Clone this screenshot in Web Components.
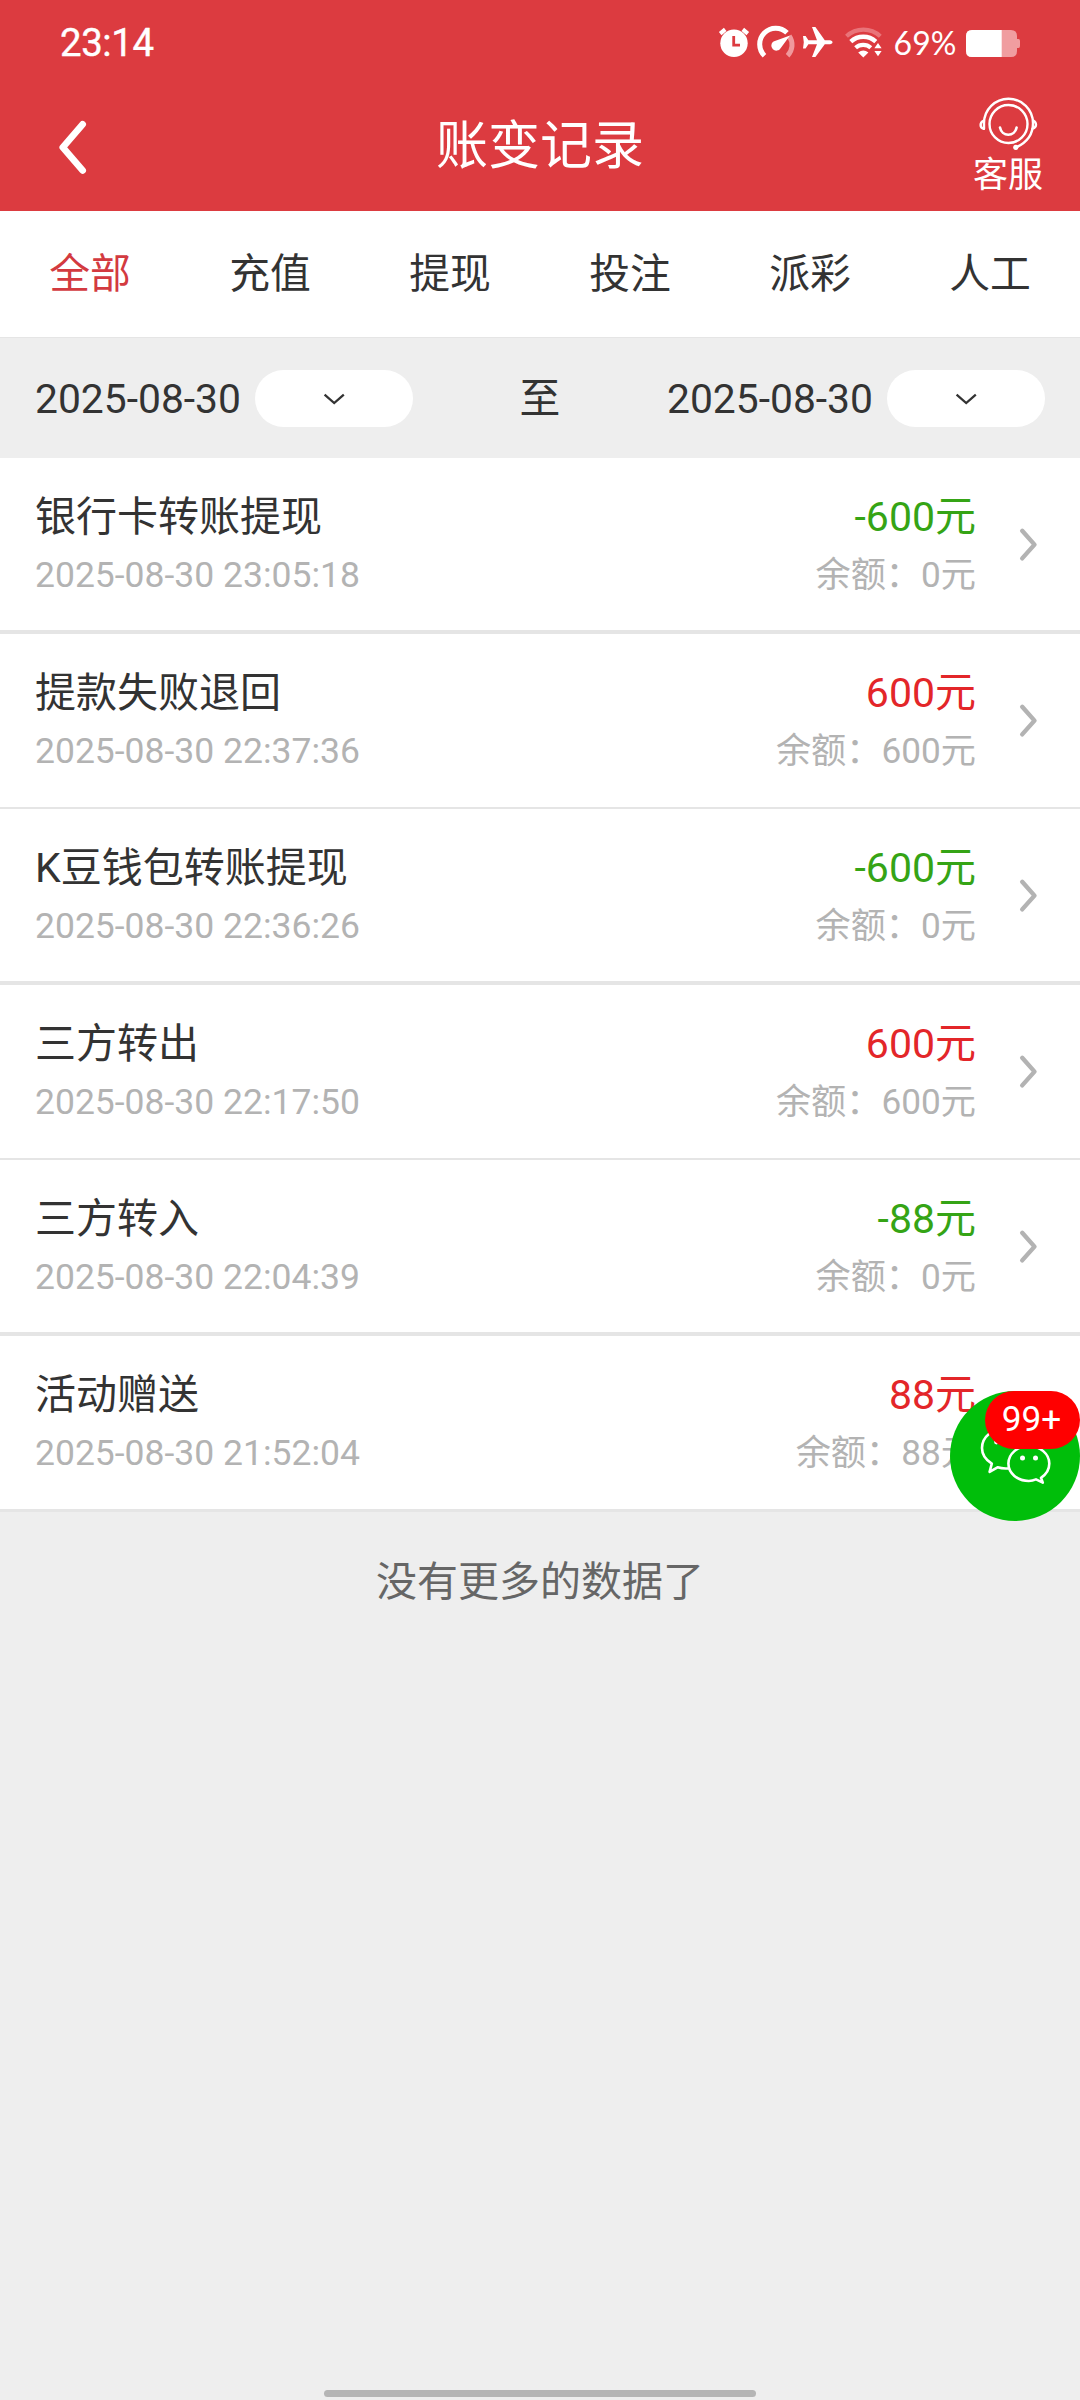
<!DOCTYPE html>
<html lang="zh-CN">
<head>
<meta charset="utf-8">
<title>账变记录</title>
<style>
html,body{margin:0;padding:0}
body{width:1080px;height:2400px;overflow:hidden;background:#eee;color:#333;font-family:Roboto,"Noto Sans CJK SC",sans-serif}
</style>
</head>
<body>
<app-screen></app-screen>
<script>
const define = (name, html) => {
  const t = document.createElement('template');
  t.innerHTML = html;
  customElements.define(name, class extends HTMLElement {
    constructor() {
      super();
      this.attachShadow({mode: 'open'}).append(t.content.cloneNode(true));
    }
  });
};

define('status-bar', `
<style>
:host{display:flex;height:84px;box-sizing:border-box;align-items:flex-start;justify-content:space-between;padding:0 60px;color:#fff}
.time{font-size:38.4px;line-height:44px;padding-top:21px;letter-spacing:-.4px;-webkit-text-stroke:.4px #fff}
.right{display:flex;align-items:flex-start}
.icons{display:block;margin-top:24px}
.pct{font-family:Lato,sans-serif;font-size:32px;line-height:38px;padding-top:24px;width:66px;text-align:center;margin:0 8px 0 6px}
.bat{display:block;margin-top:30px}
</style>
<span class="time">23:14</span>
<div class="right">
<svg class="icons" width="170" height="36" viewBox="716 24 170 36" fill="none" stroke-linecap="butt">
  <circle cx="734" cy="43.3" r="13.7" fill="#fff"/>
  <path d="M720.2 33.6l5-4.2M747.8 33.6l-5-4.2" stroke="#fff" stroke-width="4"/>
  <path d="M733.7 36v9.2h6.3" stroke="#dc3b40" stroke-width="2.8"/>
  <path d="M764.5 55.7A15.4 15.4 0 0 1 787 32.8" stroke="#fff" stroke-width="5"/>
  <path d="M789.2 36A15.4 15.4 0 0 1 787.6 55.7" stroke="#f0989c" stroke-width="5"/>
  <path d="M790 35.5L780.6 48.2A5 5 0 1 1 773.5 41.5Z" fill="#fff"/>
  <path d="M803 36h2.6l2.8 4.2h8.6L812 27h3.4l9.4 13.2h5.4q2.4.5 2.4 2t-2.4 2h-5.4L815.4 57H812l5-12.8h-8.6l-2.8 4.2H803l.8-6.2z" fill="#fff"/>
  <path d="M846.5 36.2A25 25 0 0 1 880.3 36.2" stroke="#e97479" stroke-width="4.2"/>
  <path d="M850.8 41.6A18.5 18.5 0 0 1 875.8 41.6" stroke="#fff" stroke-width="4.4"/>
  <path d="M855.6 47.8A11.3 11.3 0 0 1 870.8 47.8" stroke="#fff" stroke-width="4.2"/>
  <path d="M858.2 52.4Q863.3 48.8 868.4 52.4L863.3 57.4Z" fill="#fff"/>
  <path d="M878 43l3.6 5.2h-7.2zM878 56.2l3.6-5.2h-7.2z" fill="#fff"/>
</svg>
<span class="pct">69%</span>
<svg class="bat" width="54" height="27" viewBox="0 0 54 27">
  <path d="M6 0H45Q51 0 51 6V9h1.5Q54 9 54 11v5q0 2-1.5 2H51v3q0 6-6 6H6q-6 0-6-6V6Q0 0 6 0Z" fill="#f09da0"/>
  <path d="M6 0H35.7V27H6q-6 0-6-6V6Q0 0 6 0Z" fill="#fff"/>
</svg>
</div>`);

define('nav-bar', `
<style>
:host{display:grid;grid-template-columns:1fr auto 1fr;height:127px;align-items:start;color:#fff}
.back{display:block;margin:34px 0 0 56px}
.title{font-size:52px;line-height:66px;padding-top:30px}
.svc{justify-self:end;width:80px;margin-right:32px;display:flex;flex-direction:column;align-items:center;padding-top:10px}
.svc svg{display:block}
.label{font-size:35px;line-height:40px;margin-top:4px}
</style>
<svg class="back" width="34" height="58" viewBox="56 118 34 58" fill="none" stroke="#fff" stroke-width="6.8" stroke-linecap="round" stroke-linejoin="round"><path d="M82.6 124.4L62.8 147.4L82.6 170.4"/></svg>
<span class="title"><slot></slot></span>
<div class="svc">
<svg width="68" height="58" viewBox="974.2 94 68 58" fill="none" stroke="#fff" stroke-width="2.4" stroke-linecap="round">
  <path d="M984.2 128.8V123.2A24.5 24.5 0 0 1 1033.2 123.2Q1033.2 139.5 1016.5 147.3"/>
  <circle cx="1008.7" cy="124" r="19"/>
  <path d="M1000.2 127.6A8.5 9.2 0 0 0 1016.8 127.6" stroke-width="2.6"/>
  <path d="M984 120.5Q980.8 122 980.8 125T984 128.8M1033.5 120.5Q1036.2 122 1036.2 124.8T1032.8 128.6"/>
  <circle cx="1016" cy="147.3" r="2.6" fill="#fff" stroke="none"/>
</svg>
<span class="label">客服</span>
</div>`);

define('tab-bar', `
<style>:host{display:flex;height:126px;background:#fff}</style><slot></slot>`);
define('tab-item', `
<style>
:host{display:flex;flex:1;justify-content:center;font-size:40.8px;line-height:126px;color:#333}
:host([active]){color:#d33a40}
</style><slot></slot>`);

define('date-field', `
<style>
:host{display:flex;align-items:center;gap:14px;font-size:40.8px;line-height:57px}
.date{width:206px;height:57px;line-height:59px;white-space:nowrap}
.pill{display:flex;width:158px;height:57px;border-radius:29px;background:#fff;align-items:center;justify-content:center}
</style>
<span class="date"><slot></slot></span>
<span class="pill"><svg width="22" height="12" viewBox="0 0 22 12" fill="none" stroke="#333" stroke-width="2.3"><path d="M1.6 1.6L11.2 10L20.8 1.6"/></svg></span>`);
define('date-range', `
<style>
:host{display:flex;box-sizing:border-box;height:121px;padding:1px 35px 0;border-top:1px solid #e5e5e5;background:#eee;align-items:center;justify-content:space-between;font-size:40.8px;line-height:57px}
::slotted(span){padding-top:2px}
</style><slot></slot>`);

define('record-item', `
<style>
:host{display:flex;box-sizing:border-box;height:176px;background:#fff;border-bottom:4px solid #e5e5e5;padding:29px 42px 0 35px;align-items:flex-start}
:host(:nth-child(even)){height:175px;border-bottom-width:2px}
:host(:last-child){height:176px;border-bottom-width:3px}
.col{display:flex;flex-direction:column;gap:3px;flex:1;white-space:nowrap}
.end{text-align:right}
.main{font-size:41px;line-height:60px;color:#333}
.sub{font-size:35.5px;line-height:50px;color:#b3b3b3}
.end .sub{font-size:35.2px}
svg{display:block;margin:39px 0 0 42px}
</style>
<div class="col"><span class="main"><slot name="title"></slot></span><span class="sub"><slot name="time"></slot></span></div>
<div class="col end"><span class="main"><slot name="amount"></slot></span><span class="sub"><slot name="balance"></slot></span></div>
<svg width="20" height="37" viewBox="0 0 20 37" fill="none" stroke="#b3b3b3" stroke-width="4.4" stroke-linecap="round" stroke-linejoin="round"><path d="M4.2 4.8L16.5 18.6L4.2 32.4"/></svg>
`);

define('record-list', `<style>:host{display:block}</style><slot></slot>`);

define('chat-float', `
<style>
:host{position:absolute;left:950px;top:1391px;width:130px;height:130px}
svg{display:block}
.badge{position:absolute;right:0;top:0;width:95px;height:58px;box-sizing:border-box;padding-right:2px;border-radius:29px;background:#f00;color:#fff;font-size:35.2px;line-height:56px;text-align:center}
</style>
<svg width="130" height="130" viewBox="950 1391 130 130" fill="none" stroke="#fff" stroke-width="2.6" stroke-linejoin="round">
  <circle cx="1015" cy="1456" r="65" fill="#00be0a" stroke="none"/>
  <path d="M1009.5 1468.3Q1003 1469 997.5 1467.3L989.6 1471.8L991.8 1463.6C985.6 1459.8 982 1454 982 1448C982 1436.5 993 1428 1006.5 1428C1018 1428 1027 1435 1030 1446"/>
  <circle cx="996.5" cy="1442" r="2.4" fill="#fff" stroke="none"/>
  <path d="M1042.8 1482.6L1041 1477.8C1046 1474.6 1049.3 1469.2 1049.3 1463.6C1049.3 1453.8 1040 1446 1028.8 1446S1008.4 1453.8 1008.4 1463.6S1017.6 1481 1028.8 1481Q1032.4 1481 1036 1479.4Z"/>
  <circle cx="1022.5" cy="1458" r="2.5" fill="#fff" stroke="none"/><circle cx="1035.5" cy="1458" r="2.5" fill="#fff" stroke="none"/>
</svg>
<span class="badge"><slot></slot></span>`);

const rows = [
  ['银行卡转账提现','2025-08-30 23:05:18','-600元','余额：0元'],
  ['提款失败退回','2025-08-30 22:37:36','600元','余额：600元'],
  ['K豆钱包转账提现','2025-08-30 22:36:26','-600元','余额：0元'],
  ['三方转出','2025-08-30 22:17:50','600元','余额：600元'],
  ['三方转入','2025-08-30 22:04:39','-88元','余额：0元'],
  ['活动赠送','2025-08-30 21:52:04','88元','余额：88元']
].map(([a,b,c,d]) => `<record-item><span slot="title">${a}</span><span slot="time">${b}</span><span slot="amount" style="color:${c[0]==='-'?'#35a415':'#e32629'}">${c}</span><span slot="balance">${d}</span></record-item>`).join('');

define('app-screen', `
<style>
:host{display:flex;flex-direction:column;position:relative;width:1080px;height:2400px;background:#eee}
header{background:#dc3b40}
.end{font-size:41px;line-height:60px;text-align:center;color:#666;padding-top:40px}
.home{width:432px;height:7px;border-radius:4px;background:#b5b5b5;margin:auto auto 3px}
</style>
<header><status-bar></status-bar><nav-bar>账变记录</nav-bar></header>
<tab-bar><tab-item active>全部</tab-item><tab-item>充值</tab-item><tab-item>提现</tab-item><tab-item>投注</tab-item><tab-item>派彩</tab-item><tab-item>人工</tab-item></tab-bar>
<date-range><date-field>2025-08-30</date-field><span>至</span><date-field>2025-08-30</date-field></date-range>
<record-list>${rows}</record-list>
<div class="end">没有更多的数据了</div>
<div class="home"></div>
<chat-float>99+</chat-float>`);
</script>
</body>
</html>
